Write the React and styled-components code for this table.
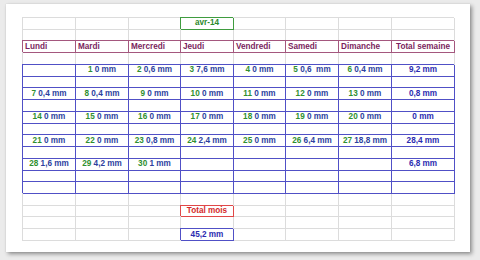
import React from "react";
import styled, { createGlobalStyle, css } from "styled-components";

const Global = createGlobalStyle`
  html, body { margin: 0; padding: 0; }
  body {
    width: 480px;
    height: 260px;
    background: #ebebeb;
    font-family: "Liberation Sans", Arial, sans-serif;
    overflow: hidden;
  }
`;

const Stage = styled.div`
  padding: 4px 0 0 6px;
`;

const Sheet = styled.div`
  width: 464px;
  height: 248px;
  box-sizing: border-box;
  background: #ffffff;
  padding: 13px 0 0 16px;
  box-shadow: 2px 2px 4px rgba(0, 0, 0, 0.4), 0 0 1px rgba(0, 0, 0, 0.15);
`;

const Grid = styled.div`
  display: grid;
  grid-template-columns: 53px 53px 52px 53px 52px 53px 53px 63px;
  grid-template-rows: repeat(19, 11.74px);
  width: 432px;
  border-top: 1px solid #dcdcdc;
  border-left: 1px solid #dcdcdc;
  box-sizing: border-box;
`;

const tones = {
  plain: { line: "#dcdcdc", text: "#333" },
  blue: { line: "#5050c6", text: "#2b2bb0" },
  head: { line: "#a4577e", text: "#7b1f5e" },
  green: { line: "#3f9c3f", text: "#2c8a2c" },
  red: { line: "#e04848", text: "#d42a2a" },
};

const Cell = styled.div`
  box-sizing: border-box;
  border-right: 1px solid ${(p) => tones[p.$tone].line};
  border-bottom: 1px solid ${(p) => tones[p.$tone].line};
  color: ${(p) => tones[p.$tone].text};
  font-size: 8.2px;
  font-weight: bold;
  line-height: 10px;
  white-space: nowrap;
  overflow: visible;
  display: flex;
  align-items: center;
  justify-content: ${(p) => (p.$left ? "flex-start" : "center")};
  padding-left: ${(p) => (p.$left ? "2px" : "0")};
  ${(p) =>
    p.$tone !== "plain" &&
    css`
      box-shadow: -1px -1px 0 0 ${tones[p.$tone].line};
    `}
`;

const Day = styled.span`
  color: #2f8f2f;
`;

const Amount = styled.span`
  color: #2d3f9e;
`;

const days = ["Lundi", "Mardi", "Mercredi", "Jeudi", "Vendredi", "Samedi", "Dimanche", "Total semaine"];

const weeks = [
  [null, ["1", "0 mm"], ["2", "0,6 mm"], ["3", "7,6 mm"], ["4", "0 mm"], ["5", "0,6\u00a0 mm"], ["6", "0,4 mm"], "9,2 mm"],
  [["7", "0,4 mm"], ["8", "0,4 mm"], ["9", "0 mm"], ["10", "0 mm"], ["11", "0 mm"], ["12", "0 mm"], ["13", "0 mm"], "0,8 mm"],
  [["14", "0 mm"], ["15", "0 mm"], ["16", "0 mm"], ["17", "0 mm"], ["18", "0 mm"], ["19", "0 mm"], ["20", "0 mm"], "0 mm"],
  [["21", "0 mm"], ["22", "0 mm"], ["23", "0,8 mm"], ["24", "2,4 mm"], ["25", "0 mm"], ["26", "6,4 mm"], ["27", "18,8 mm"], "28,4 mm"],
  [["28", "1,6 mm"], ["29", "4,2 mm"], ["30", "1 mm"], null, null, null, null, "6,8 mm"],
];

const cols = [0, 1, 2, 3, 4, 5, 6, 7];

function PlainRow({ special }) {
  return cols.map((c) =>
    special && special.col === c ? (
      <Cell key={c} $tone={special.tone}>{special.text}</Cell>
    ) : (
      <Cell key={c} $tone="plain" />
    )
  );
}

function BlueRow({ values }) {
  return cols.map((c) => {
    const v = values ? values[c] : null;
    return (
      <Cell key={c} $tone="blue">
        {Array.isArray(v) ? (
          <>
            <Day>{v[0]}</Day>&nbsp;<Amount>{v[1]}</Amount>
          </>
        ) : (
          v
        )}
      </Cell>
    );
  });
}

export default function App() {
  return (
    <>
      <Global />
      <Stage>
        <Sheet>
          <Grid>
            <PlainRow special={{ col: 3, tone: "green", text: "avr-14" }} />
            <PlainRow />
            {days.map((d, i) => (
              <Cell key={d} $tone="head" $left={i < 7}>
                {d}
              </Cell>
            ))}
            <PlainRow />
            {weeks.map((w, i) => (
              <React.Fragment key={i}>
                <BlueRow values={w} />
                <BlueRow />
              </React.Fragment>
            ))}
            <BlueRow />
            <PlainRow />
            <PlainRow special={{ col: 3, tone: "red", text: "Total mois" }} />
            <PlainRow />
            <PlainRow special={{ col: 3, tone: "blue", text: "45,2 mm" }} />
          </Grid>
        </Sheet>
      </Stage>
    </>
  );
}
